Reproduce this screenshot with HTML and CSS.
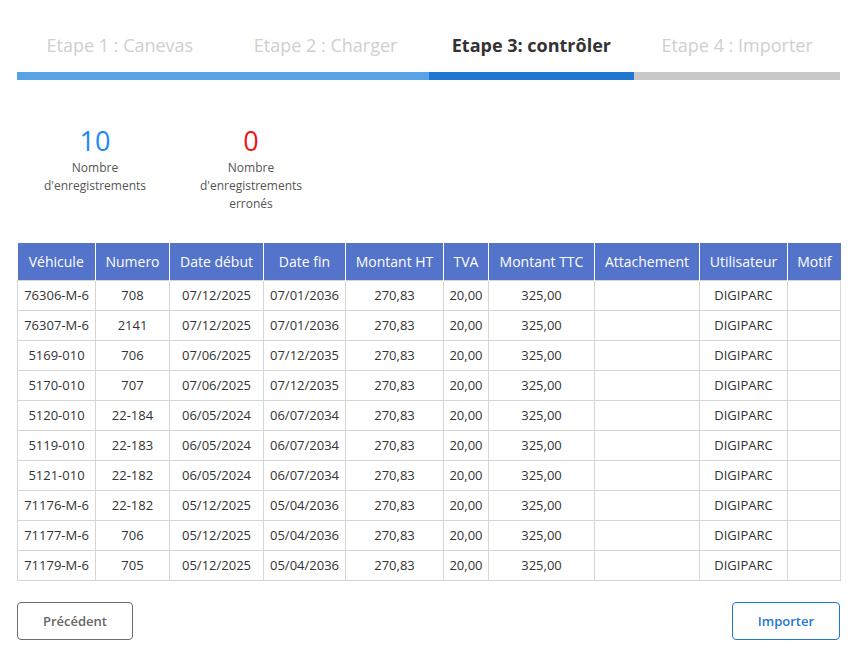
FILE: index.html
```html
<!DOCTYPE html>
<html lang="fr">
<head>
  <meta charset="UTF-8" />
  <title>Import - contrôle</title>
  <meta name="viewport" content="width=device-width, initial-scale=1.0" />
  <link rel="stylesheet" href="styles.css">
</head>
<body>

<div class="wizard">
  <div class="steps">
    <div class="step done"><span>Etape 1 : Canevas</span></div>
    <div class="step done"><span>Etape 2 : Charger</span></div>
    <div class="step active"><span>Etape 3: contrôler</span></div>
    <div class="step todo"><span>Etape 4 : Importer</span></div>
  </div>

  <div class="stats">
    <div class="stat">
      <p class="stat-value ok">10</p>
      <p class="stat-label">Nombre<br>d'enregistrements</p>
    </div>
    <div class="stat">
      <p class="stat-value error">0</p>
      <p class="stat-label">Nombre<br>d'enregistrements<br>erronés</p>
    </div>
  </div>

  <table class="grid">
    <colgroup>
      <col class="c-veh"><col class="c-num"><col class="c-deb"><col class="c-fin"><col class="c-ht">
      <col class="c-tva"><col class="c-ttc"><col class="c-att"><col class="c-usr"><col class="c-mot">
    </colgroup>
    <thead>
      <tr>
        <th>Véhicule</th><th>Numero</th><th>Date début</th><th>Date fin</th><th>Montant HT</th>
        <th>TVA</th><th>Montant TTC</th><th>Attachement</th><th>Utilisateur</th><th>Motif</th>
      </tr>
    </thead>
    <tbody>
      <tr><td>76306-M-6</td><td>708</td><td>07/12/2025</td><td>07/01/2036</td><td>270,83</td><td>20,00</td><td>325,00</td><td></td><td>DIGIPARC</td><td></td></tr>
      <tr><td>76307-M-6</td><td>2141</td><td>07/12/2025</td><td>07/01/2036</td><td>270,83</td><td>20,00</td><td>325,00</td><td></td><td>DIGIPARC</td><td></td></tr>
      <tr><td>5169-010</td><td>706</td><td>07/06/2025</td><td>07/12/2035</td><td>270,83</td><td>20,00</td><td>325,00</td><td></td><td>DIGIPARC</td><td></td></tr>
      <tr><td>5170-010</td><td>707</td><td>07/06/2025</td><td>07/12/2035</td><td>270,83</td><td>20,00</td><td>325,00</td><td></td><td>DIGIPARC</td><td></td></tr>
      <tr><td>5120-010</td><td>22-184</td><td>06/05/2024</td><td>06/07/2034</td><td>270,83</td><td>20,00</td><td>325,00</td><td></td><td>DIGIPARC</td><td></td></tr>
      <tr><td>5119-010</td><td>22-183</td><td>06/05/2024</td><td>06/07/2034</td><td>270,83</td><td>20,00</td><td>325,00</td><td></td><td>DIGIPARC</td><td></td></tr>
      <tr><td>5121-010</td><td>22-182</td><td>06/05/2024</td><td>06/07/2034</td><td>270,83</td><td>20,00</td><td>325,00</td><td></td><td>DIGIPARC</td><td></td></tr>
      <tr><td>71176-M-6</td><td>22-182</td><td>05/12/2025</td><td>05/04/2036</td><td>270,83</td><td>20,00</td><td>325,00</td><td></td><td>DIGIPARC</td><td></td></tr>
      <tr><td>71177-M-6</td><td>706</td><td>05/12/2025</td><td>05/04/2036</td><td>270,83</td><td>20,00</td><td>325,00</td><td></td><td>DIGIPARC</td><td></td></tr>
      <tr><td>71179-M-6</td><td>705</td><td>05/12/2025</td><td>05/04/2036</td><td>270,83</td><td>20,00</td><td>325,00</td><td></td><td>DIGIPARC</td><td></td></tr>
    </tbody>
  </table>

  <div class="actions">
    <button class="btn btn-back">Précédent</button>
    <button class="btn btn-next">Importer</button>
  </div>
</div>

</body>
</html>
```

FILE: styles.css
```css
* { box-sizing: border-box; margin: 0; padding: 0; }
body { font-family: "Open Sans", Arial, sans-serif; background: #fff; color: #333; }
.wizard {
  width: 823px;
  margin-left: 17px;
  padding-top: 32px;
}
.steps {
  display: flex;
}
.step {
  flex: 1;
  text-align: center;
  font-size: 18px;
  color: #cfcfcf;
  padding-bottom: 14px;
  border-bottom: 8px solid #c8c8c8;
  line-height: 26px;
}
.step.done { border-bottom-color: #5aa2e6; }
.step.active {
  border-bottom-color: #1e78d2;
  color: #333;
  font-weight: bold;
}
.stats {
  display: flex;
  margin-top: 43px;
}
.stat {
  width: 156px;
  text-align: center;
}
.stat-value {
  font-size: 27px;
  line-height: 36px;
}
.stat-value.ok { color: #1e88f5; }
.stat-value.error { color: #f01414; }
.stat-label {
  font-size: 12px;
  line-height: 18px;
  color: #555;
}
.grid {
  margin-top: 30px;
  width: 823px;
  border-collapse: collapse;
  table-layout: fixed;
  font-size: 13px;
}
.c-veh { width: 78px; }
.c-num { width: 74px; }
.c-deb { width: 94px; }
.c-fin { width: 82px; }
.c-ht { width: 98px; }
.c-tva { width: 45px; }
.c-ttc { width: 106px; }
.c-att { width: 105px; }
.c-usr { width: 88px; }
.c-mot { width: 53px; }
.grid th {
  background: #5473ca;
  color: #fff;
  font-weight: normal;
  font-size: 14px;
  height: 37px;
  border-left: 1px solid #fff;
  white-space: nowrap;
}
.grid th:first-child { border-left: none; }
.grid td {
  height: 30px;
  text-align: center;
  border: 1px solid #d6d6d6;
  white-space: nowrap;
  color: #333;
}
.actions {
  display: flex;
  justify-content: space-between;
  margin-top: 21px;
}
.btn {
  font-family: "Open Sans", Arial, sans-serif;
  font-size: 13px;
  font-weight: 600;
  height: 38px;
  background: #fff;
  border-radius: 4px;
  cursor: pointer;
}
.btn-back {
  width: 116px;
  border: 1px solid #6c6c6c;
  color: #666;
}
.btn-next {
  width: 108px;
  border: 1px solid #1e78d2;
  color: #1e78d2;
}
```
